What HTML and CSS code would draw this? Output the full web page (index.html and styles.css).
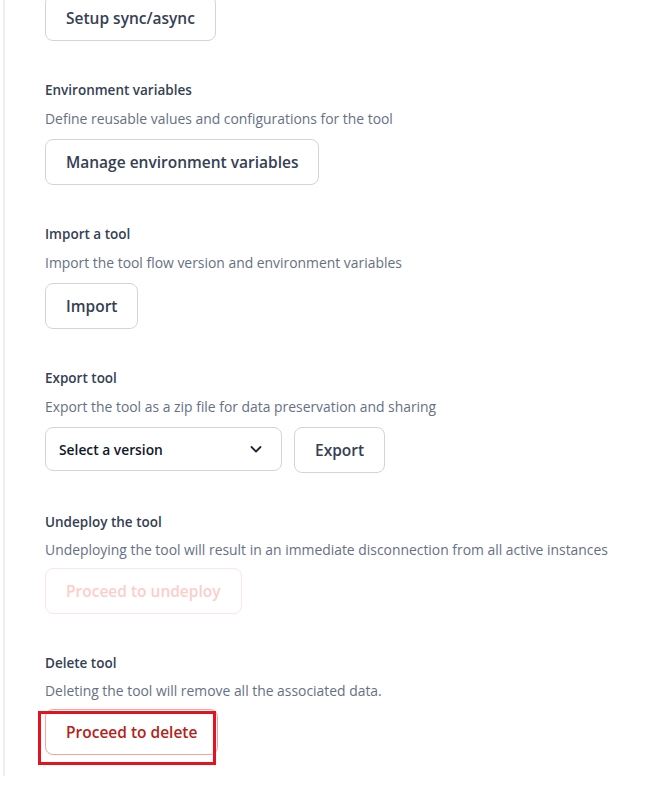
FILE: index.html
```html
<!DOCTYPE html>
<html lang="en">
<head>
    <meta charset="UTF-8">
    <meta name="viewport" content="width=device-width, initial-scale=1.0">
    <title>Tool settings</title>
    <link rel="stylesheet" href="styles.css">
</head>
<body>
    <div class="panel">
        <section class="setting first">
            <button class="btn">Setup sync/async</button>
        </section>

        <section class="setting">
            <h3 class="label">Environment variables</h3>
            <p class="desc">Define reusable values and configurations for the tool</p>
            <button class="btn">Manage environment variables</button>
        </section>

        <section class="setting">
            <h3 class="label">Import a tool</h3>
            <p class="desc">Import the tool flow version and environment variables</p>
            <button class="btn">Import</button>
        </section>

        <section class="setting">
            <h3 class="label">Export tool</h3>
            <p class="desc">Export the tool as a zip file for data preservation and sharing</p>
            <div class="row">
                <div class="select">
                    <span>Select a version</span>
                    <svg width="14" height="14" viewBox="0 0 14 14" fill="none">
                        <path d="M2.5 5l4.5 4.5L11.5 5" stroke="#1d2939" stroke-width="1.8" stroke-linecap="round" stroke-linejoin="round"/>
                    </svg>
                </div>
                <button class="btn">Export</button>
            </div>
        </section>

        <section class="setting tight">
            <h3 class="label">Undeploy the tool</h3>
            <p class="desc">Undeploying the tool will result in an immediate disconnection from all active instances</p>
            <button class="btn danger" disabled>Proceed to undeploy</button>
        </section>

        <section class="setting tight">
            <h3 class="label">Delete tool</h3>
            <p class="desc">Deleting the tool will remove all the associated data.</p>
            <div class="marked">
                <button class="btn danger">Proceed to delete</button>
                <span class="highlight"></span>
            </div>
        </section>
    </div>
</body>
</html>
```

FILE: styles.css
```css
* {
    margin: 0;
    padding: 0;
    box-sizing: border-box;
}
body {
    font-family: "Open Sans", "Noto Sans", Arial, sans-serif;
    background-color: #ffffff;
    color: #344054;
    height: 793px;
    overflow: hidden;
}
.panel {
    margin-left: 3px;
    margin-top: -5px;
    height: 781px;
    border-left: 2px solid #eceef1;
    padding-left: 40px;
}
.setting {
    padding-top: 39px;
}
.setting.first {
    padding-top: 0;
}
.label {
    font-size: 13.5px;
    font-weight: 600;
    line-height: 20px;
    color: #344054;
}
.desc {
    font-size: 13.9px;
    line-height: 20px;
    color: #667085;
    margin-top: 9px;
    margin-bottom: 10px;
}
.tight .desc {
    margin-top: 8px;
    margin-bottom: 8px;
}
.btn {
    font-family: inherit;
    font-size: 15.5px;
    font-weight: 600;
    height: 46px;
    padding: 0 20px;
    border: 1px solid #d0d5dd;
    border-radius: 8px;
    background-color: #ffffff;
    color: #344054;
    cursor: pointer;
}
.btn.danger {
    color: #b42318;
    border-color: #fda29b;
}
.btn.danger:disabled {
    color: #fecdca;
    border-color: #fee4e2;
    cursor: default;
}
.row {
    display: flex;
    gap: 12px;
    align-items: flex-start;
}
.select {
    width: 237px;
    height: 44px;
    border: 1px solid #d0d5dd;
    border-radius: 8px;
    display: flex;
    align-items: center;
    justify-content: space-between;
    padding: 0 18px 0 13px;
    font-size: 13.8px;
    font-weight: 600;
    color: #101828;
}
.marked {
    position: relative;
    display: inline-block;
}
.highlight {
    position: absolute;
    left: -7px;
    top: 2px;
    width: 178px;
    height: 54px;
    border: 3px solid #e5121f;
}
```
